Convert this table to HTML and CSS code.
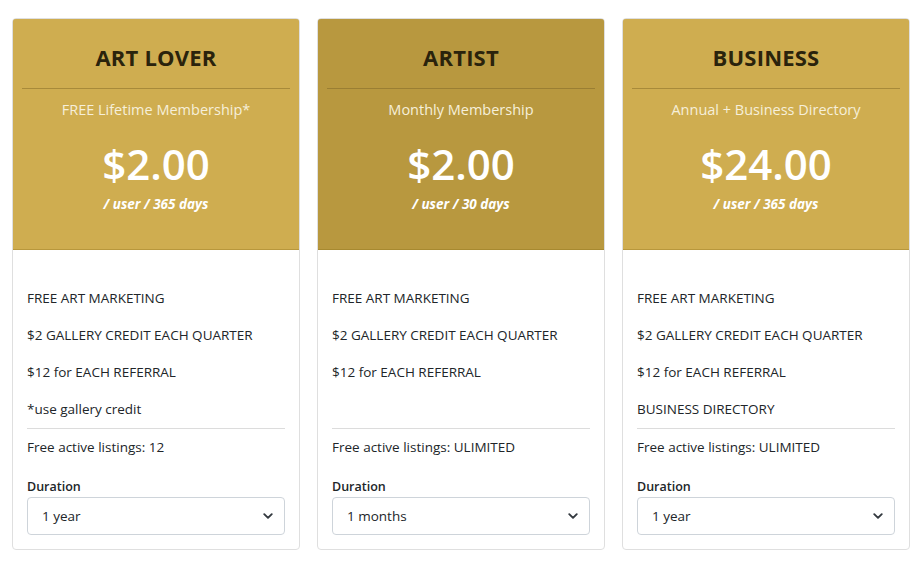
FILE: index.html
```html
<!DOCTYPE html>
<html>
<head>
<meta charset="utf-8">
<link rel="stylesheet" href="styles.css">
</head>
<body>
<div class="plans">
  <div class="card">
    <div class="head">
      <h2 class="title">ART LOVER</h2>
      <div class="sub">FREE Lifetime Membership*</div>
      <div class="price">$2.00</div>
      <div class="per">/ user / 365 days</div>
    </div>
    <div class="body">
      <ul class="feats">
        <li>FREE ART MARKETING</li>
        <li>$2 GALLERY CREDIT EACH QUARTER</li>
        <li>$12 for EACH REFERRAL</li>
        <li>*use gallery credit</li>
      </ul>
      <div class="listings">Free active listings: 12</div>
      <label class="lbl">Duration</label>
      <div class="select"><span>1 year</span><svg width="10" height="10" viewBox="0 0 16 16"><path d="M2 5l6 6 6-6" fill="none" stroke="#343a40" stroke-width="3" stroke-linecap="round" stroke-linejoin="round"/></svg></div>
    </div>
  </div>
  <div class="card dark">
    <div class="head">
      <h2 class="title">ARTIST</h2>
      <div class="sub">Monthly Membership</div>
      <div class="price">$2.00</div>
      <div class="per">/ user / 30 days</div>
    </div>
    <div class="body">
      <ul class="feats">
        <li>FREE ART MARKETING</li>
        <li>$2 GALLERY CREDIT EACH QUARTER</li>
        <li>$12 for EACH REFERRAL</li>
        <li>&nbsp;</li>
      </ul>
      <div class="listings">Free active listings: ULIMITED</div>
      <label class="lbl">Duration</label>
      <div class="select"><span>1 months</span><svg width="10" height="10" viewBox="0 0 16 16"><path d="M2 5l6 6 6-6" fill="none" stroke="#343a40" stroke-width="3" stroke-linecap="round" stroke-linejoin="round"/></svg></div>
    </div>
  </div>
  <div class="card">
    <div class="head">
      <h2 class="title">BUSINESS</h2>
      <div class="sub">Annual + Business Directory</div>
      <div class="price">$24.00</div>
      <div class="per">/ user / 365 days</div>
    </div>
    <div class="body">
      <ul class="feats">
        <li>FREE ART MARKETING</li>
        <li>$2 GALLERY CREDIT EACH QUARTER</li>
        <li>$12 for EACH REFERRAL</li>
        <li>BUSINESS DIRECTORY</li>
      </ul>
      <div class="listings">Free active listings: ULIMITED</div>
      <label class="lbl">Duration</label>
      <div class="select"><span>1 year</span><svg width="10" height="10" viewBox="0 0 16 16"><path d="M2 5l6 6 6-6" fill="none" stroke="#343a40" stroke-width="3" stroke-linecap="round" stroke-linejoin="round"/></svg></div>
    </div>
  </div>
</div>
</body>
</html>
```
FILE: styles.css
```css
* { box-sizing: border-box; }
body {
  margin: 0;
  background: #fff;
  font-family: "Open Sans", "Noto Sans", sans-serif;
  color: #212529;
}
.plans {
  display: grid;
  grid-template-columns: repeat(3, 288px);
  gap: 17px;
  padding: 18px 12px 0;
}
.card {
  border: 1px solid #dfdfdf;
  border-radius: 4px;
  overflow: hidden;
  display: flex;
  flex-direction: column;
  height: 532px;
}
.head {
  background: #cfad50;
  border: 1px solid #b8973c;
  border-radius: 4px 4px 0 0;
  margin: -1px -1px 0;
  height: 232px;
  padding: 0 9px;
  text-align: center;
}
.dark .head { background: #b8983f; border-color: #a78930; }
.title {
  margin: 0;
  padding-top: 23px;
  height: 70px;
  font-size: 22px;
  font-weight: 700;
  color: #2a230c;
  letter-spacing: 0.2px;
  border-bottom: 1px solid #a88a3a;
}
.dark .title { border-bottom-color: #9a7e33; }
.sub {
  margin-top: 11px;
  font-size: 14.5px;
  color: #f6efda;
}
.price {
  margin-top: 22px;
  font-size: 42px;
  line-height: 46px;
  font-weight: 600;
  color: #fff;
}
.per {
  margin-top: 8px;
  font-size: 13.5px;
  font-weight: 700;
  font-style: italic;
  color: #fff;
}
.body {
  padding: 38px 14px 0;
  font-size: 13.5px;
}
.feats {
  list-style: none;
  margin: 0;
  padding: 0;
  border-bottom: 1px solid #dcdcdc;
}
.feats li {
  line-height: 21px;
  margin-bottom: 16px;
}
.feats li:last-child { margin-bottom: 8px; }
.listings {
  line-height: 21px;
  margin-top: 8px;
}
.lbl {
  display: block;
  margin-top: 19px;
  font-size: 12.5px;
  font-weight: 600;
  line-height: 19px;
}
.select {
  margin-top: 1px;
  height: 38px;
  border: 1px solid #ced4da;
  border-radius: 4px;
  display: flex;
  align-items: center;
  justify-content: space-between;
  padding: 0 11px 0 14px;
  font-size: 13.5px;
}
```
